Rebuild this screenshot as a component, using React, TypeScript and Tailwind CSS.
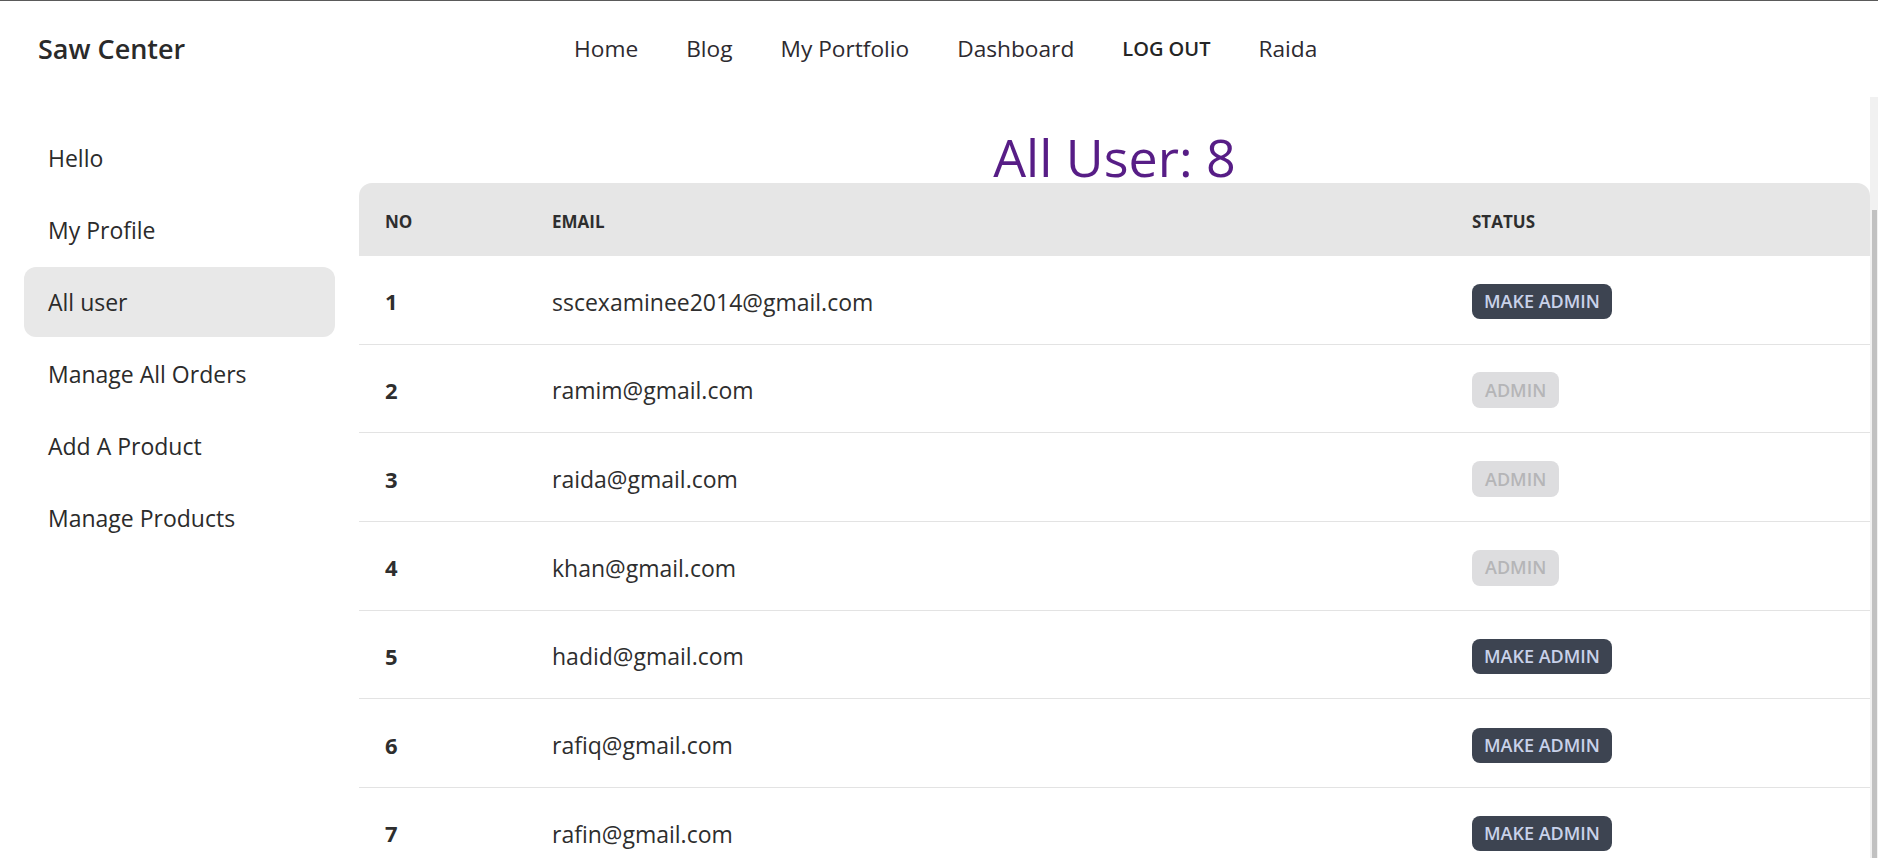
import React from 'react';

interface User {
  email: string;
  admin: boolean;
}

// only the rows that fit on screen are listed
const users: User[] = [
  { email: 'sscexaminee2014@gmail.com', admin: false },
  { email: 'ramim@gmail.com', admin: true },
  { email: 'raida@gmail.com', admin: true },
  { email: 'khan@gmail.com', admin: true },
  { email: 'hadid@gmail.com', admin: false },
  { email: 'rafiq@gmail.com', admin: false },
  { email: 'rafin@gmail.com', admin: false },
];

const menuItems = ['Hello', 'My Profile', 'All user', 'Manage All Orders', 'Add A Product', 'Manage Products'];

const Navbar: React.FC = () => {
  return (
    <div className="flex h-[97px] shrink-0 items-center border-t border-[#5a5a5a]">
      <div className="w-[574px] pl-[38px] text-[27px] font-semibold text-[#2a2a2a]">Saw Center</div>
      <nav className="flex items-center gap-[48px] text-[22.7px] text-[#2d2a30]">
        <a>Home</a>
        <a>Blog</a>
        <a>My Portfolio</a>
        <a>Dashboard</a>
        <button className="text-[20px] font-semibold uppercase text-[#252525]">Log out</button>
        <a>Raida</a>
      </nav>
    </div>
  );
};

const Sidebar: React.FC = () => {
  return (
    <aside className="w-[359px] shrink-0 px-[24px] pt-[26px]">
      <ul className="flex flex-col gap-[2px] text-[23px] text-[#2b2b2b]">
        {menuItems.map((item) => (
          <li
            key={item}
            className={
              item === 'All user'
                ? 'flex h-[70px] items-center rounded-[12px] bg-[#e8e8e8] px-[24px]'
                : 'flex h-[70px] items-center rounded-[12px] px-[24px]'
            }
          >
            {item}
          </li>
        ))}
      </ul>
    </aside>
  );
};

const UsersTable: React.FC = () => {
  return (
    <div className="w-full">
      <div className="grid h-[73px] grid-cols-[193px_920px_1fr] items-center rounded-t-[13px] bg-[#e6e6e6] pt-[4px] text-[17px] font-bold text-[#2e2e2e]">
        <div className="pl-[26px]">NO</div>
        <div>EMAIL</div>
        <div>STATUS</div>
      </div>
      {users.map((user, i) => (
        <div
          key={user.email}
          className="grid h-[88.67px] grid-cols-[193px_920px_1fr] items-center border-b border-[#e3e3e3] pt-[4px] text-[#2e2e2e]"
        >
          <div className="pl-[26px] text-[22px] font-bold">{i + 1}</div>
          <div className="text-[23px]">{user.email}</div>
          <div>
            {user.admin ? (
              <button className="h-[36px] rounded-[8px] bg-[#dddddf] px-[13px] text-[18px] font-semibold text-[#b5b5b7]">
                ADMIN
              </button>
            ) : (
              <button className="h-[35px] rounded-[8px] bg-[#3d4451] px-[12px] text-[18px] font-semibold text-[#c9d2ea]">
                MAKE ADMIN
              </button>
            )}
          </div>
        </div>
      ))}
    </div>
  );
};

export default function App() {
  return (
    <div className="flex h-screen w-full flex-col overflow-hidden bg-white font-['Open_Sans',sans-serif]">
      <Navbar />
      <div className="flex min-h-0 flex-1">
        <Sidebar />
        <main className="flex min-w-0 flex-1 flex-col overflow-hidden">
          <h1 className="mt-[34px] text-center text-[52px] leading-[52px] text-[#571d86]">All User: 8</h1>
          <UsersTable />
        </main>
        {/* scrollbar of the content pane */}
        <div className="flex w-[8px] shrink-0 flex-col bg-[#f1f1f1]">
          <div className="h-[113px] shrink-0" />
          <div className="ml-[2px] mr-[1px] flex-1 bg-[#c1c1c1]" />
        </div>
      </div>
    </div>
  );
}
